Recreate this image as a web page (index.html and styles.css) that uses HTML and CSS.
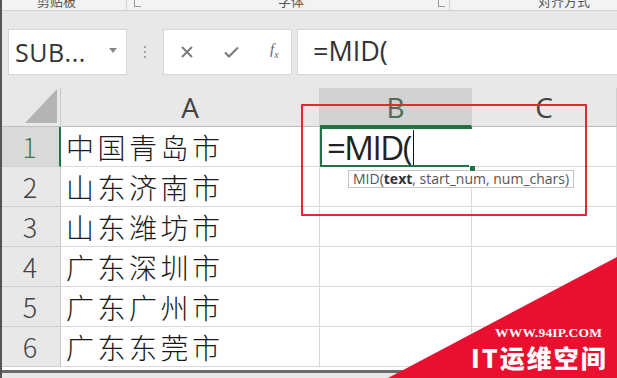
FILE: index.html
```html
<!DOCTYPE html>
<html lang="zh-CN">
<head>
    <meta charset="UTF-8">
    <meta name="viewport" content="width=device-width, initial-scale=1.0">
    <title>MID 函数</title>
    <link rel="stylesheet" href="styles.css">
</head>
<body>
<div class="app">
    <div class="ribbon-labels">
        <span class="group g-clip">剪贴板</span>
        <span class="launcher l-clip"></span>
        <span class="sep s-clip"></span>
        <span class="group g-font">字体</span>
        <span class="launcher l-font"></span>
        <span class="sep s-font"></span>
        <span class="group g-align">对齐方式</span>
    </div>

    <div class="formula-bar">
        <div class="name-box">
            <span class="name-text">SUB...</span>
            <svg class="name-arrow" width="8" height="5" viewBox="0 0 8 5"><path d="M0 0h8L4 5z" fill="#8a8a8a"/></svg>
        </div>
        <div class="grip">
            <i></i><i></i><i></i>
        </div>
        <div class="fx-buttons">
            <svg width="12" height="12" viewBox="0 0 12 12"><path d="M1 1l10 10M11 1L1 11" stroke="#7a7a7a" stroke-width="1.8" fill="none"/></svg>
            <svg width="15" height="12" viewBox="0 0 15 12"><path d="M1 6.5l4 4L14 1.5" stroke="#7a7a7a" stroke-width="2" fill="none"/></svg>
            <span class="fx">f<sub>x</sub></span>
        </div>
        <div class="formula-input">=MID(</div>
    </div>

    <div class="sheet">
        <div class="corner"><svg width="32" height="34" viewBox="0 0 32 34"><path d="M32 0V34H0z" fill="#b4b4b4"/></svg></div>
        <div class="col-head">A</div>
        <div class="col-head active">B</div>
        <div class="col-head">C</div>

        <div class="row-head active">1</div>
        <div class="cell">中国青岛市</div>
        <div class="cell editing">=MID(<span class="caret"></span></div>
        <div class="cell"></div>

        <div class="row-head">2</div>
        <div class="cell">山东济南市</div>
        <div class="cell"></div>
        <div class="cell"></div>

        <div class="row-head">3</div>
        <div class="cell">山东潍坊市</div>
        <div class="cell"></div>
        <div class="cell"></div>

        <div class="row-head">4</div>
        <div class="cell">广东深圳市</div>
        <div class="cell"></div>
        <div class="cell"></div>

        <div class="row-head">5</div>
        <div class="cell">广东广州市</div>
        <div class="cell"></div>
        <div class="cell"></div>

        <div class="row-head">6</div>
        <div class="cell">广东东莞市</div>
        <div class="cell"></div>
        <div class="cell"></div>
    </div>
    <div class="sheet-bottom"></div>

    <!-- overlays -->
    <div class="tooltip">MID(<b>text</b>, start_num, num_chars)</div>
    <div class="fill-handle"></div>
    <div class="highlight"></div>
    <div class="watermark">
        <svg width="617" height="378" viewBox="0 0 617 378"><path d="M388 378L617 257V378z" fill="#ea0f2f"/></svg>
        <div class="wm-url">WWW.94IP.COM</div>
        <div class="wm-name">IT运维空间</div>
    </div>
</div>
</body>
</html>
```

FILE: styles.css
```css
html, body {
    margin: 0;
    padding: 0;
}
body {
    width: 617px;
    height: 378px;
    overflow: hidden;
    font-family: "Open Sans", "Noto Sans CJK SC", sans-serif;
    background: #e8e8e8;
}
.app {
    position: relative;
    width: 617px;
    height: 378px;
    overflow: hidden;
    border-left: 2px solid #555;
    box-sizing: border-box;
}

/* ribbon group captions, cut off at the top */
.ribbon-labels {
    position: relative;
    height: 10px;
    background: #f3f3f3;
    border-bottom: 1px solid #d2d2d2;
    overflow: hidden;
    font-family: "Noto Sans CJK SC", sans-serif;
    font-size: 13px;
    color: #555;
}
.group {
    position: absolute;
    top: -6px;
    line-height: 14px;
}
.g-clip { left: 35px; }
.g-font { left: 276px; }
.g-align { left: 536px; }
.launcher {
    position: absolute;
    top: 0;
    width: 6px;
    height: 6px;
    border-left: 1px solid #999;
    border-bottom: 1px solid #999;
}
.l-clip { left: 132px; }
.l-font { left: 436px; }
.sep {
    position: absolute;
    top: 0;
    width: 1px;
    height: 10px;
    background: #d0d0d0;
}
.s-clip { left: 124px; }
.s-font { left: 447px; }

/* formula bar */
.formula-bar {
    display: flex;
    align-items: stretch;
    height: 46px;
    padding: 18px 0 13px 6px;
    background: #e8e8e8;
}
.name-box {
    display: flex;
    align-items: center;
    justify-content: space-between;
    width: 119px;
    padding: 0 9px 0 6px;
    box-sizing: border-box;
    background: #fff;
    border: 1px solid #d6d6d6;
}
.name-text {
    font-size: 25px;
    color: #333;
    letter-spacing: 0.5px;
}
.name-arrow {
    margin-top: -4px;
}
.grip {
    display: flex;
    flex-direction: column;
    justify-content: center;
    gap: 3px;
    width: 36px;
    align-items: center;
}
.grip i {
    display: block;
    width: 2px;
    height: 2px;
    background: #a5a5a5;
}
.fx-buttons {
    display: flex;
    align-items: center;
    gap: 31px;
    width: 129px;
    padding-left: 17px;
    box-sizing: border-box;
    background: #fff;
    border: 1px solid #d6d6d6;
}
.fx {
    font-family: "Liberation Serif", serif;
    font-style: italic;
    font-size: 15px;
    color: #666;
    margin-top: -4px;
}
.fx sub {
    font-size: 10px;
}
.formula-input {
    flex: 1;
    margin-left: 5px;
    padding-left: 15px;
    background: #fff;
    border: 1px solid #d6d6d6;
    border-right: none;
    font-size: 27px;
    line-height: 42px;
    color: #333;
}

/* worksheet grid */
.sheet {
    display: grid;
    grid-template-columns: 59px 259px 152px 145px;
    grid-template-rows: 39px repeat(6, 40px);
    background: #fff;
}
.corner {
    display: flex;
    align-items: flex-end;
    justify-content: flex-end;
    padding: 0 3px 3px 0;
    background: #e8e8e8;
    border-right: 1px solid #c9c9c9;
    border-bottom: 1px solid #bdbdbd;
}
.col-head {
    display: flex;
    align-items: center;
    justify-content: center;
    background: #e8e8e8;
    border-right: 1px solid #cfcfcf;
    border-bottom: 1px solid #bdbdbd;
    font-size: 28px;
    color: #444;
}
.col-head.active {
    background: #d2d2d2;
    color: #4f6b5a;
    border-bottom: 2px solid #217346;
}
.row-head {
    display: flex;
    align-items: center;
    justify-content: center;
    background: #e8e8e8;
    border-right: 1px solid #c9c9c9;
    border-bottom: 1px solid #cfcfcf;
    font-family: "Noto Sans CJK SC", sans-serif;
    font-weight: 300;
    font-size: 27px;
    color: #444;
    padding-right: 2px;
}
.row-head.active {
    background: #d9d9d9;
    color: #3e7a57;
    border-right: 2px solid #217346;
}
.cell {
    display: flex;
    align-items: center;
    padding-left: 5px;
    border-right: 1px solid #dadada;
    border-bottom: 1px solid #dadada;
    font-family: "Noto Sans CJK SC", sans-serif;
    font-weight: 300;
    font-size: 28px;
    letter-spacing: 3.5px;
    color: #1a1a1a;
    overflow: hidden;
    white-space: nowrap;
}
.cell.editing {
    border: 2px solid #217346;
    border-right: none;
    padding-left: 5px;
    font-family: "Open Sans", sans-serif;
    font-weight: 400;
    font-size: 33px;
    letter-spacing: -1.5px;
    color: #222;
}
.caret {
    display: inline-block;
    width: 1px;
    height: 35px;
    margin-left: 2px;
    background: #111;
}
.sheet-bottom {
    height: 3px;
    background: #fff;
    border-bottom: 3px solid #6a6a6a;
}

/* overlays */
.tooltip {
    position: absolute;
    left: 346px;
    top: 170px;
    padding: 0 4px;
    height: 16px;
    line-height: 16px;
    background: #fff;
    border: 1px solid #c4c4c4;
    font-size: 14px;
    color: #555;
    white-space: nowrap;
}
.tooltip b {
    color: #333;
}
.fill-handle {
    position: absolute;
    left: 467px;
    top: 165px;
    width: 5px;
    height: 5px;
    background: #217346;
    border: 1px solid #fff;
}
.highlight {
    position: absolute;
    left: 299px;
    top: 104px;
    width: 282px;
    height: 108px;
    border: 2px solid #e22a35;
}
.watermark {
    position: absolute;
    left: -2px;
    top: 0;
    width: 617px;
    height: 378px;
    pointer-events: none;
}
.watermark svg {
    display: block;
}
.wm-url {
    position: absolute;
    left: 495px;
    top: 325px;
    font-family: "Liberation Serif", serif;
    font-weight: bold;
    font-size: 13.5px;
    line-height: 15px;
    color: #fff;
    letter-spacing: 0.2px;
}
.wm-name {
    position: absolute;
    left: 471px;
    top: 344px;
    font-family: "Noto Sans CJK SC", sans-serif;
    font-weight: 900;
    font-size: 25px;
    line-height: 27px;
    letter-spacing: 2px;
    white-space: nowrap;
    color: #fff;
}
```
